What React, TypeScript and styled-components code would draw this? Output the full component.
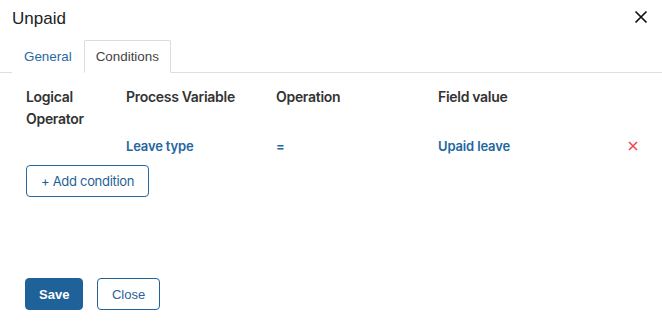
import styled, { createGlobalStyle } from "styled-components";

const GlobalStyle = createGlobalStyle`
  body {
    margin: 0;
    background: #fff;
    font-family: "Liberation Sans", Arial, sans-serif;
  }
`;

const Dialog = styled.div`
  width: 662px;
  height: 328px;
  display: flex;
  flex-direction: column;
  box-sizing: border-box;
`;

const Header = styled.div`
  height: 40px;
  display: flex;
  justify-content: space-between;
  align-items: flex-start;
  padding: 9px 13px 0 12px;
  box-sizing: border-box;
`;

const Title = styled.h1`
  margin: 0;
  font-size: 17px;
  line-height: 20px;
  font-weight: 400;
  color: #222;
`;

const CloseIcon = styled.button`
  border: 0;
  padding: 0;
  background: none;
  width: 16px;
  height: 16px;
  cursor: pointer;
  display: flex;
`;

const TabBar = styled.div`
  display: flex;
  padding-left: 12px;
  border-bottom: 1px solid #dedede;
`;

const Tab = styled.div<{ $active?: boolean }>`
  height: 33px;
  box-sizing: border-box;
  margin-bottom: -1px;
  padding: 0 11px;
  line-height: 31px;
  font-size: 13.4px;
  border: 1px solid ${({ $active }) => ($active ? "#dcdcdc" : "transparent")};
  border-bottom-color: ${({ $active }) => ($active ? "#fff" : "transparent")};
  border-radius: 2px 2px 0 0;
  background: #fff;
  color: ${({ $active }) => ($active ? "#444" : "#2769a3")};
`;

const Body = styled.div`
  flex: 1;
  padding: 13px 24px 0 26px;
  font-family: Inter, "Liberation Sans", sans-serif;
  font-size: 14px;
`;

const Grid = styled.div`
  display: grid;
  grid-template-columns: 100px 150px 162px 1fr auto;
  align-items: start;
`;

const HeadCell = styled.div`
  font-weight: 600;
  line-height: 22px;
  letter-spacing: -0.3px;
  color: #333;
  padding-bottom: 5px;
`;

const Cell = styled.div`
  font-size: 13px;
  font-weight: 600;
  letter-spacing: -0.15px;
  line-height: 22px;
  color: #2366a0;
  display: flex;
  align-items: center;
  min-height: 22px;
`;

const AddButton = styled.button`
  margin-top: 8px;
  height: 32px;
  padding: 0 14px;
  font-family: Inter, "Liberation Sans", sans-serif;
  font-size: 13px;
  letter-spacing: -0.3px;
  color: #1f5f96;
  background: #fff;
  border: 1px solid #2a679c;
  border-radius: 4px;
  cursor: pointer;
`;

const Footer = styled.div`
  display: flex;
  gap: 14px;
  padding: 0 0 18px 25px;
`;

const Button = styled.button<{ $primary?: boolean }>`
  height: 32px;
  padding: 0 ${({ $primary }) => ($primary ? "13px" : "13.5px")};
  font-family: "Liberation Sans", Arial, sans-serif;
  font-size: 13px;
  font-weight: ${({ $primary }) => ($primary ? 700 : 400)};
  border-radius: 4px;
  border: 1px solid #1f6299;
  background: ${({ $primary }) => ($primary ? "#1f6299" : "#fff")};
  color: ${({ $primary }) => ($primary ? "#fff" : "#2a629a")};
  cursor: pointer;
`;

export default function App() {
  return (
    <>
      <GlobalStyle />
      <Dialog>
        <Header>
          <Title>Unpaid</Title>
          <CloseIcon aria-label="Close">
            <svg width="16" height="16" viewBox="0 0 16 16">
              <path d="M2.5 2.5 L13.5 13.5 M13.5 2.5 L2.5 13.5" stroke="#111" strokeWidth="1.7" />
            </svg>
          </CloseIcon>
        </Header>
        <TabBar>
          <Tab>General</Tab>
          <Tab $active>Conditions</Tab>
        </TabBar>
        <Body>
          <Grid>
            <HeadCell>
              Logical
              <br />
              Operator
            </HeadCell>
            <HeadCell>Process Variable</HeadCell>
            <HeadCell>Operation</HeadCell>
            <HeadCell>Field value</HeadCell>
            <HeadCell />
            <Cell />
            <Cell>Leave type</Cell>
            <Cell>=</Cell>
            <Cell>Upaid leave</Cell>
            <Cell>
              <svg width="10" height="10" viewBox="0 0 10 10">
                <path d="M1 1 L9 9 M9 1 L1 9" stroke="#f0434b" strokeWidth="1.5" />
              </svg>
            </Cell>
          </Grid>
          <AddButton>+ Add condition</AddButton>
        </Body>
        <Footer>
          <Button $primary>Save</Button>
          <Button>Close</Button>
        </Footer>
      </Dialog>
    </>
  );
}
